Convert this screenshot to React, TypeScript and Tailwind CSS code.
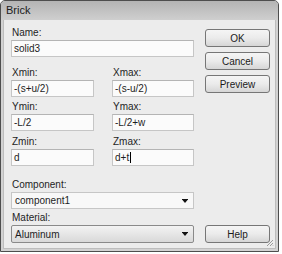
import React from "react";

function Field({ label, value, caret }: { label: string; value: string; caret?: boolean }) {
  return (
    <div className="flex flex-col">
      <div className="h-[12px] leading-[12px] pl-[1px]">{label}</div>
      <div className="mt-[1px] h-[17px] flex items-center px-[2px] bg-[#fbfbfb] border border-[#c6c6c6] border-t-[#b4b4b4]">
        <span>{value}</span>
        {caret && <span className="w-px h-[11px] bg-black ml-[1px]" />}
      </div>
    </div>
  );
}

function Arrow() {
  return (
    <svg width="6" height="4" viewBox="0 0 6 4" className="shrink-0">
      <rect x="0" y="0" width="6" height="1" fill="#111" />
      <polygon points="0.5,1 5.5,1 3,4" fill="#111" />
    </svg>
  );
}

function Btn({ children, className = "" }: { children: React.ReactNode; className?: string }) {
  return (
    <button
      type="button"
      className={`h-[18px] w-[65px] flex items-center justify-center rounded-[3px] border border-[#767676] bg-gradient-to-b from-[#f5f5f5] via-[#ebebeb] to-[#d6d6d6] text-[#1a1a1a] ${className}`}
    >
      {children}
    </button>
  );
}

export default function App() {
  return (
    <div className="w-[282px] h-[254px] bg-white" style={{ fontFamily: '"Liberation Sans", Arial, sans-serif' }}>
      {/* dialog window */}
      <div className="w-[279px] h-[252px] flex flex-col border border-[#4e4e4e] rounded-t-[5px] bg-[#d2d2d2] text-[10px] text-[#1e1e1e]">
        {/* title bar */}
        <div className="h-[19px] shrink-0 flex items-center pl-[5px] rounded-t-[4px] bg-gradient-to-b from-[#b4b4b4] to-[#cfcfcf] text-[11px] text-[#202020]">
          Brick
        </div>
        {/* body */}
        <div className="relative flex-1 mx-[2px] mb-[2px] bg-[#ececec] border-x border-b border-[#bdbdbd] flex items-start pl-[7px]">
          {/* left column */}
          <div className="w-[183px] flex flex-col pt-[7px]">
            <Field label="Name:" value="solid3" />
            <div className="mt-[10px] flex gap-[18px]">
              <div className="w-[83px]"><Field label="Xmin:" value="-(s+u/2)" /></div>
              <div className="w-[82px]"><Field label="Xmax:" value="-(s-u/2)" /></div>
            </div>
            <div className="mt-[4px] flex gap-[18px]">
              <div className="w-[83px]"><Field label="Ymin:" value="-L/2" /></div>
              <div className="w-[82px]"><Field label="Ymax:" value="-L/2+w" /></div>
            </div>
            <div className="mt-[5px] flex gap-[18px]">
              <div className="w-[83px]"><Field label="Zmin:" value="d" /></div>
              <div className="w-[82px]"><Field label="Zmax:" value="d+t" caret /></div>
            </div>
            {/* component combo */}
            <div className="mt-[13px] h-[12px] leading-[12px] pl-[1px]">Component:</div>
            <div className="mt-[1px] h-[17px] flex items-center justify-between pl-[3px] pr-[5px] bg-[#f8f8f8] border border-[#c6c6c6]">
              <span>component1</span>
              <Arrow />
            </div>
            {/* material combo */}
            <div className="mt-[3px] h-[12px] leading-[12px] pl-[1px]">Material:</div>
            <div className="mt-[1px] h-[18px] flex items-center justify-between pl-[3px] pr-[5px] rounded-[2px] bg-gradient-to-b from-[#f3f3f3] to-[#d9d9d9] border border-[#8a8a8a]">
              <span>Aluminum</span>
              <Arrow />
            </div>
          </div>
          {/* right column buttons */}
          <div className="ml-[11px] flex flex-col pt-[9px]">
            <Btn>OK</Btn>
            <Btn className="mt-[5px]">Cancel</Btn>
            <Btn className="mt-[5px]">Preview</Btn>
            <Btn className="mt-[132px]">Help</Btn>
          </div>
          {/* resize grip */}
          <svg width="8" height="8" viewBox="0 0 8 8" className="absolute right-[1px] bottom-[1px]">
            <line x1="7" y1="1" x2="1" y2="7" stroke="#9a9a9a" />
            <line x1="7" y1="4" x2="4" y2="7" stroke="#9a9a9a" />
            <line x1="7" y1="6.5" x2="6.5" y2="7" stroke="#9a9a9a" />
          </svg>
        </div>
      </div>
    </div>
  );
}
